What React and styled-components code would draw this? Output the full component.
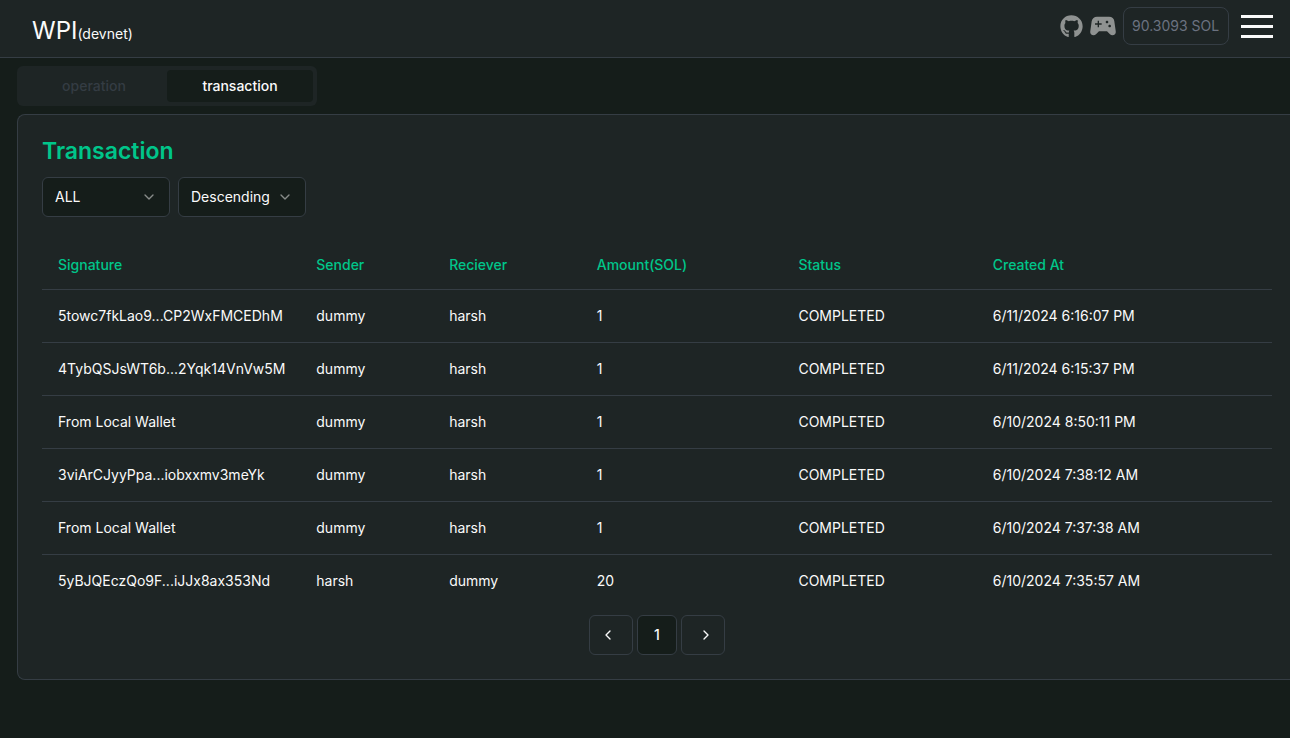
import { useState } from 'react';
import styled, { createGlobalStyle } from 'styled-components';
import { ChevronDown, ChevronLeft, ChevronRight } from 'lucide-react';
import { FaGithub } from 'react-icons/fa';
import { MdSportsEsports } from 'react-icons/md';

const colors = {
  page: '#151d1a',
  surface: '#1e2525',
  border: '#353d44',
  accent: '#00c58a',
  text: '#fafafa',
  icon: '#8f9291',
  muted: '#6b7280',
  disabled: '#343c43',
};

const GlobalStyle = createGlobalStyle`
  *, *::before, *::after {
    box-sizing: border-box;
  }

  body {
    margin: 0;
    background: ${colors.page};
    color: ${colors.text};
    font-family: Inter, 'Liberation Sans', sans-serif;
    font-size: 14px;
    line-height: 20px;
  }

  button, select {
    font: inherit;
    color: inherit;
  }
`;

const Header = styled.header`
  display: flex;
  align-items: center;
  justify-content: space-between;
  height: 58px;
  padding: 0 17px 0 32px;
  background: ${colors.surface};
  border-bottom: 1px solid ${colors.border};
`;

const Brand = styled.a`
  padding-top: 8px;
  color: ${colors.text};
  font-size: 24px;
  line-height: 32px;
  text-decoration: none;
`;

const Network = styled.span`
  font-size: 14px;
`;

const HeaderActions = styled.div`
  display: flex;
  align-items: center;
  gap: 4px;
  padding-bottom: 5px;
`;

const IconLink = styled.a`
  display: flex;
  color: ${colors.icon};
`;

const Balance = styled.div`
  min-width: 106px;
  padding: 8px;
  border: 1px solid ${colors.border};
  border-radius: 8px;
  color: ${colors.muted};
`;

const MenuButton = styled.button`
  display: flex;
  flex-direction: column;
  gap: 7px;
  width: 32px;
  margin-left: 8px;
  padding: 0;
  border: 0;
  background: none;
  cursor: pointer;
`;

const MenuBar = styled.span`
  height: 3px;
  background: ${colors.text};
`;

const Main = styled.main`
  padding: 8px 0 56px 17px;
`;

const TabList = styled.div`
  display: grid;
  grid-template-columns: 1fr 1fr;
  width: 300px;
  height: 40px;
  padding: 4px;
  border-radius: 6px;
  background: ${colors.surface};
`;

const Tab = styled.button`
  padding: 0;
  border: 0;
  border-radius: 4px;
  background: ${({ $active }) => ($active ? colors.page : 'transparent')};
  color: ${({ $active }) => ($active ? colors.text : colors.disabled)};
  font-weight: 500;
  cursor: pointer;
`;

const Card = styled.section`
  margin-top: 8px;
  padding: 24px 18px 24px 24px;
  border: 1px solid ${colors.border};
  border-right: 0;
  border-radius: 8px 0 0 8px;
  background: ${colors.surface};
`;

const CardTitle = styled.h1`
  margin: 0 0 14px;
  color: ${colors.accent};
  font-size: 23px;
  font-weight: 600;
  line-height: 24px;
`;

const Filters = styled.div`
  display: flex;
  gap: 8px;
  margin-bottom: 24px;
`;

const SelectBox = styled.div`
  display: grid;
  align-items: center;
  width: 128px;
  height: 40px;

  > * {
    grid-area: 1 / 1;
  }

  svg {
    justify-self: end;
    margin-right: 13px;
    opacity: 0.5;
    pointer-events: none;
  }
`;

const Select = styled.select`
  width: 100%;
  height: 100%;
  padding: 0 12px;
  appearance: none;
  border: 1px solid ${colors.border};
  border-radius: 6px;
  background: ${colors.page};
`;

const Table = styled.table`
  width: 100%;
  table-layout: fixed;
  border-collapse: collapse;
  text-align: left;
`;

const Col = styled.col`
  width: ${({ $width }) => $width};
`;

const Row = styled.tr`
  border-bottom: 1px solid ${colors.border};

  tbody &:last-child {
    border-bottom: 0;
  }
`;

const HeadCell = styled.th`
  height: 48px;
  padding: 0 16px;
  color: ${colors.accent};
  font-weight: 500;
`;

const Cell = styled.td`
  padding: 16px;
  white-space: nowrap;
`;

const Pagination = styled.nav`
  display: flex;
  justify-content: center;
  gap: 4px;
  margin-top: 8px;
`;

const PageButton = styled.button`
  display: flex;
  align-items: center;
  width: ${({ $current }) => ($current ? '40px' : '44px')};
  height: 40px;
  justify-content: ${({ $align }) => $align || 'center'};
  padding: 0 10px;
  border: 1px solid ${colors.border};
  border-radius: 6px;
  background: ${({ $current }) => ($current ? colors.page : 'transparent')};
  font-weight: 500;
  cursor: pointer;
`;

const columns = [
  { label: 'Signature', width: '21%' },
  { label: 'Sender', width: '10.8%' },
  { label: 'Reciever', width: '12%' },
  { label: 'Amount(SOL)', width: '16.4%' },
  { label: 'Status', width: '15.8%' },
  { label: 'Created At', width: '24%' },
];

const transactions = [
  ['5towc7fkLao9...CP2WxFMCEDhM', 'dummy', 'harsh', '1', 'COMPLETED', '6/11/2024 6:16:07 PM'],
  ['4TybQSJsWT6b...2Yqk14VnVw5M', 'dummy', 'harsh', '1', 'COMPLETED', '6/11/2024 6:15:37 PM'],
  ['From Local Wallet', 'dummy', 'harsh', '1', 'COMPLETED', '6/10/2024 8:50:11 PM'],
  ['3viArCJyyPpa...iobxxmv3meYk', 'dummy', 'harsh', '1', 'COMPLETED', '6/10/2024 7:38:12 AM'],
  ['From Local Wallet', 'dummy', 'harsh', '1', 'COMPLETED', '6/10/2024 7:37:38 AM'],
  ['5yBJQEczQo9F...iJJx8ax353Nd', 'harsh', 'dummy', '20', 'COMPLETED', '6/10/2024 7:35:57 AM'],
];

function FilterSelect({ label, options }) {
  return (
    <SelectBox>
      <Select aria-label={label}>
        {options.map((option) => (
          <option key={option}>{option}</option>
        ))}
      </Select>
      <ChevronDown size={16} />
    </SelectBox>
  );
}

function TransactionTable() {
  return (
    <Table>
      <colgroup>
        {columns.map(({ label, width }) => (
          <Col key={label} $width={width} />
        ))}
      </colgroup>
      <thead>
        <Row>
          {columns.map(({ label }) => (
            <HeadCell key={label} scope="col">
              {label}
            </HeadCell>
          ))}
        </Row>
      </thead>
      <tbody>
        {transactions.map((transaction) => (
          <Row key={transaction[5]}>
            {transaction.map((value, index) => (
              <Cell key={columns[index].label}>{value}</Cell>
            ))}
          </Row>
        ))}
      </tbody>
    </Table>
  );
}

export default function App() {
  const [activeTab, setActiveTab] = useState('transaction');

  return (
    <>
      <GlobalStyle />
      <Header>
        <Brand href="#">
          WPI<Network>(devnet)</Network>
        </Brand>
        <HeaderActions>
          <IconLink href="#" aria-label="GitHub">
            <FaGithub size={23} />
          </IconLink>
          <IconLink href="#" aria-label="Games">
            <MdSportsEsports size={32} />
          </IconLink>
          <Balance>90.3093 SOL</Balance>
          <MenuButton aria-label="Menu">
            <MenuBar />
            <MenuBar />
            <MenuBar />
          </MenuButton>
        </HeaderActions>
      </Header>
      <Main>
        <TabList role="tablist">
          {['operation', 'transaction'].map((tab) => (
            <Tab
              key={tab}
              role="tab"
              aria-selected={activeTab === tab}
              $active={activeTab === tab}
              onClick={() => setActiveTab(tab)}
            >
              {tab}
            </Tab>
          ))}
        </TabList>
        <Card>
          <CardTitle>Transaction</CardTitle>
          <Filters>
            <FilterSelect label="Status" options={['ALL', 'COMPLETED']} />
            <FilterSelect label="Order" options={['Descending', 'Ascending']} />
          </Filters>
          <TransactionTable />
          <Pagination aria-label="Pages">
            <PageButton $align="flex-start" aria-label="Previous page">
              <ChevronLeft size={16} />
            </PageButton>
            <PageButton $current aria-current="page">
              1
            </PageButton>
            <PageButton $align="flex-end" aria-label="Next page">
              <ChevronRight size={16} />
            </PageButton>
          </Pagination>
        </Card>
      </Main>
    </>
  );
}
